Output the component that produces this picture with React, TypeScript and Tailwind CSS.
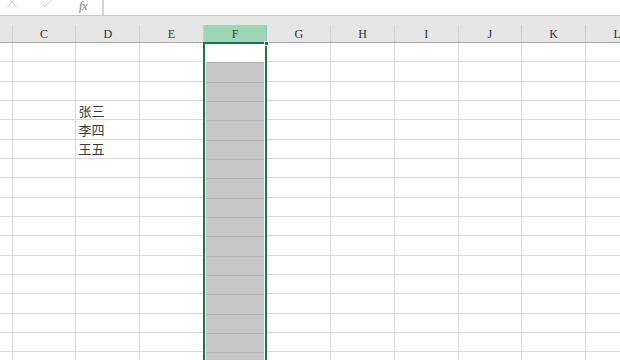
import { Check, X } from "lucide-react";

const COLS = ["C", "D", "E", "F", "G", "H", "I", "J", "K", "L"];
const ROW_COUNT = 17;

// row index -> text in column D
const NAMES: Record<number, string> = {
  3: "张三",
  4: "李四",
  5: "王五",
};

function Column({ name }: { name: string }) {
  return (
    <div className="flex w-[63.7px] shrink-0 flex-col">
      {Array.from({ length: ROW_COUNT }).map((_, i) => (
        <div
          key={i}
          className="flex h-[19.33px] shrink-0 items-center border-r border-b border-[#dadada] pl-[2px] text-[13px] leading-none text-[#3a3a3a]"
          style={{ fontFamily: '"Noto Sans CJK SC", "Noto Sans", sans-serif' }}
        >
          {name === "D" ? NAMES[i] : null}
        </div>
      ))}
    </div>
  );
}

function SelectedColumn() {
  return (
    <div className="relative -mt-px -ml-px flex w-[64.7px] shrink-0 flex-col border-x-2 border-t-2 border-[#217346] bg-white px-px">
      <div className="h-[18.33px] shrink-0 bg-white" />
      {Array.from({ length: ROW_COUNT - 1 }).map((_, i) => (
        <div key={i} className="h-[19.33px] shrink-0 border-t border-[#b2b2b2] bg-[#c6c6c6]" />
      ))}
      <div className="absolute -top-[3px] -right-[4px] size-[5px] border border-white bg-[#217346]" />
    </div>
  );
}

export default function App() {
  return (
    <div
      className="h-[360px] w-[620px] overflow-hidden bg-white"
      style={{ fontFamily: '"Liberation Serif", "DejaVu Serif", serif' }}
    >
      {/* formula bar, scrolled up */}
      <div className="flex h-[16px] items-start overflow-hidden border-b border-[#c8c8c8] bg-white">
        <div className="flex w-[102px] shrink-0 items-start text-[#c8c8c8]">
          <X size={18} strokeWidth={1.2} className="-mt-[7px] ml-[3px]" />
          <Check size={18} strokeWidth={1.2} className="-mt-[6px] ml-[17px]" />
          <span className="ml-[23px] text-[12px] italic leading-[12px] text-[#7a7a7a]">fx</span>
        </div>
        <div className="h-full w-[2px] bg-[#d4d4d4]" />
      </div>

      {/* gap above headers */}
      <div className="h-[9px] bg-[#e6e6e6]" />

      {/* column headers */}
      <div className="flex h-[18px] border-b border-[#ababab] bg-[#e6e6e6]">
        <div className="w-[12.7px] shrink-0 border-r border-[#cfcfcf]" />
        {COLS.map((c) => (
          <div
            key={c}
            className={
              c === "F"
                ? "flex w-[63.7px] shrink-0 items-center justify-center border-r border-[#8fc7a8] bg-[#9fd5b7] text-[12px] text-[#1f3f2c]"
                : "flex w-[63.7px] shrink-0 items-center justify-center border-r border-[#cfcfcf] text-[12px] text-[#333]"
            }
          >
            {c}
          </div>
        ))}
      </div>

      {/* cells */}
      <div className="flex">
        <div className="flex w-[12.7px] shrink-0 flex-col">
          {Array.from({ length: ROW_COUNT }).map((_, i) => (
            <div key={i} className="h-[19.33px] shrink-0 border-r border-b border-[#dadada]" />
          ))}
        </div>
        {COLS.map((c) => (c === "F" ? <SelectedColumn key={c} /> : <Column key={c} name={c} />))}
      </div>
    </div>
  );
}
